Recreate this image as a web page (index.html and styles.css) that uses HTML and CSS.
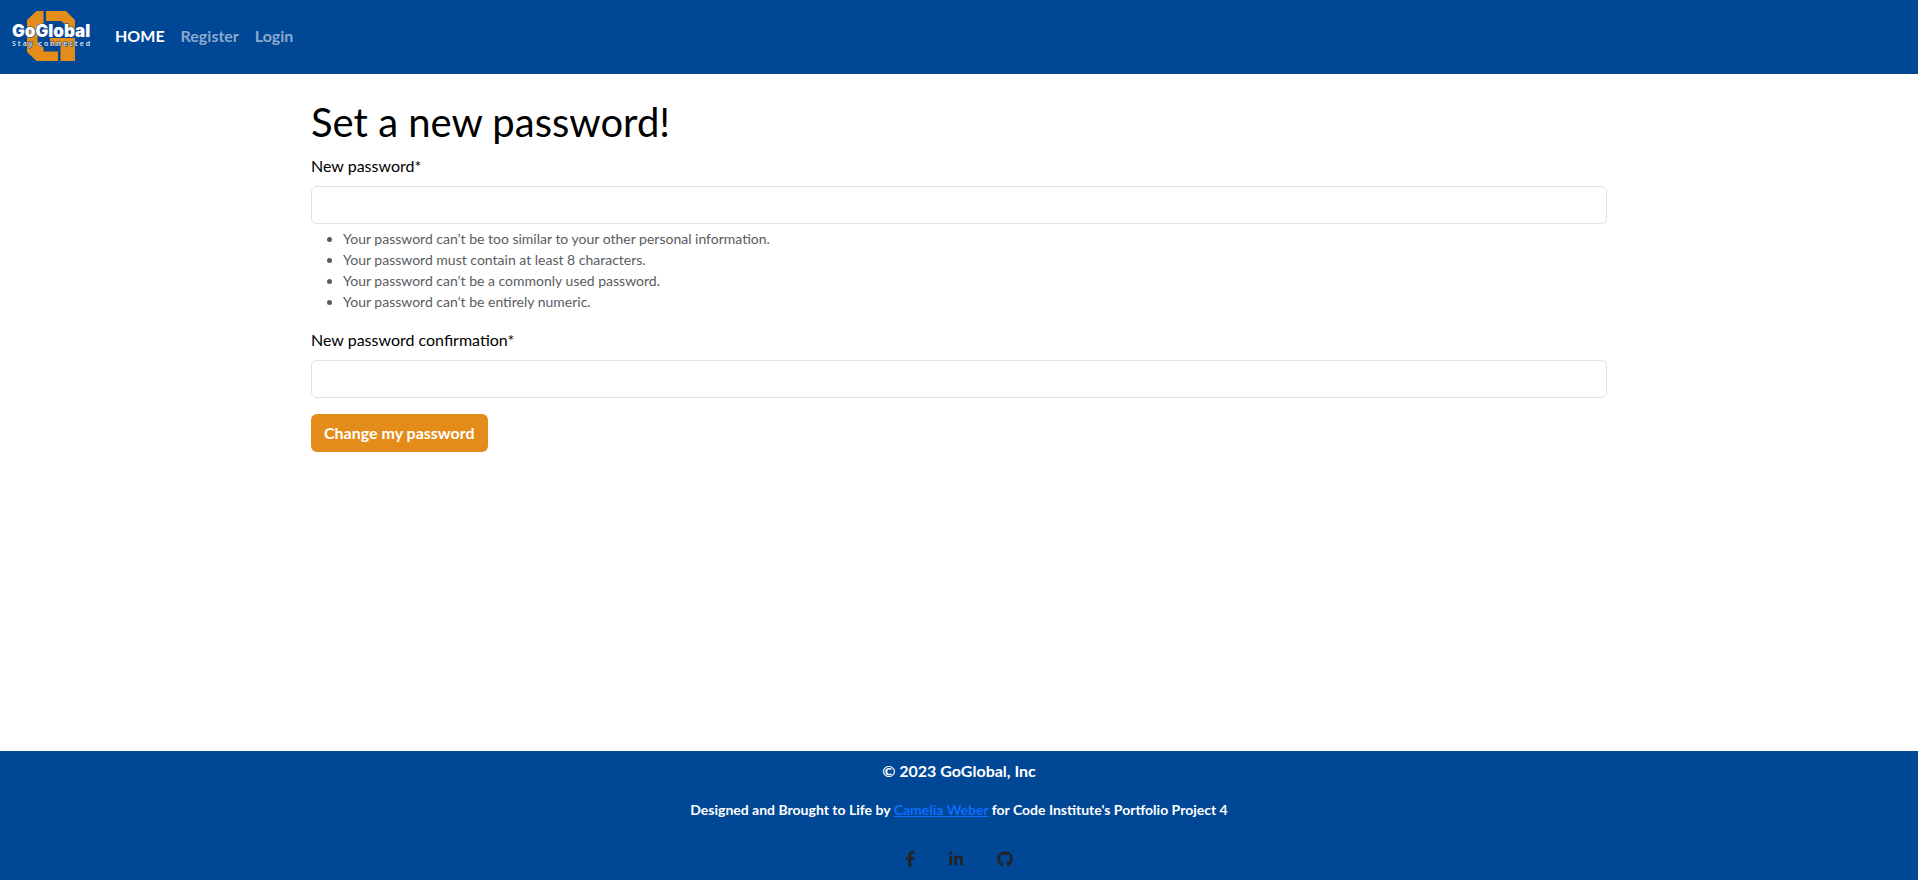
FILE: index.html
```html
<!DOCTYPE html>
<html lang="en">
<head>
<meta charset="utf-8">
<meta name="viewport" content="width=device-width, initial-scale=1">
<title>GoGlobal - Set a new password</title>
<link rel="stylesheet" href="styles.css">
</head>
<body>
<header>
  <nav class="navbar">
    <a class="brand" href="#" aria-label="GoGlobal home">
      <svg class="logo" viewBox="12 11 79 50" aria-hidden="true">
        <path class="mark" d="M36.5 11h7v14.500l-6 6v10l6 6v4H58V61H36.500L27 52V20zM46 11h20l9 9v11H65.500v-6L61 21H46zM50 38h25v23H60.500V46H50z"/>
        <text class="logo-name" x="12" y="37">GoGlobal</text>
        <text class="logo-tag" x="12" y="46">Stay connected</text>
      </svg>
    </a>
    <ul class="nav">
      <li><a class="nav-link active" href="#">HOME</a></li>
      <li><a class="nav-link" href="#">Register</a></li>
      <li><a class="nav-link" href="#">Login</a></li>
    </ul>
  </nav>
</header>
<main class="container">
  <h1>Set a new password!</h1>
  <form>
    <div class="field">
      <label for="password1">New password*</label>
      <input id="password1" type="password" aria-describedby="password-help">
      <ul class="help" id="password-help">
        <li>Your password can’t be too similar to your other personal information.</li>
        <li>Your password must contain at least 8 characters.</li>
        <li>Your password can’t be a commonly used password.</li>
        <li>Your password can’t be entirely numeric.</li>
      </ul>
    </div>
    <div class="field">
      <label for="password2">New password confirmation*</label>
      <input id="password2" type="password">
    </div>
    <button class="btn" type="button">Change my password</button>
  </form>
</main>
<footer class="footer">
  <p>© 2023 GoGlobal, Inc</p>
  <p class="credit">Designed and Brought to Life by <a href="#">Camelia Weber</a> for Code Institute's Portfolio Project 4</p>
  <div class="social">
    <a href="#" aria-label="Facebook"><svg width="10" height="16" viewBox="0 0 320 512"><path d="M279.14 288l14.22-92.66h-88.91v-60.13c0-25.35 12.42-50.06 52.24-50.06h40.42V6.26S260.43 0 225.36 0c-73.22 0-121.08 44.38-121.08 124.72v70.62H22.89V288h81.39v224h100.17V288z"/></svg></a>
    <a href="#" aria-label="LinkedIn"><svg width="14" height="16" viewBox="0 0 448 512"><path d="M100.28 448H7.4V148.9h92.88zM53.79 108.1C24.09 108.1 0 83.5 0 53.8a53.79 53.79 0 0 1 107.58 0c0 29.7-24.1 54.3-53.79 54.3zM447.9 448h-92.68V302.4c0-34.7-.7-79.2-48.29-79.2-48.29 0-55.69 37.7-55.69 76.7V448h-92.78V148.9h89.08v40.8h1.3c12.4-23.5 42.69-48.3 87.88-48.3 94 0 111.28 61.9 111.28 142.3V448z"/></svg></a>
    <a href="#" aria-label="GitHub"><svg width="16" height="16" viewBox="0 0 496 512"><path d="M165.9 397.4c0 2-2.3 3.6-5.2 3.6-3.3.3-5.6-1.3-5.6-3.6 0-2 2.3-3.6 5.2-3.6 3-.3 5.6 1.3 5.6 3.6zm-31.1-4.5c-.7 2 1.3 4.3 4.3 4.9 2.6 1 5.6 0 6.2-2s-1.3-4.3-4.3-5.2c-2.6-.7-5.5.3-6.2 2.3zm44.2-1.7c-2.9.7-4.9 2.6-4.6 4.9.3 2 2.9 3.3 5.9 2.6 2.9-.7 4.9-2.6 4.6-4.6-.3-1.9-3-3.2-5.9-2.9zM244.8 8C106.1 8 0 113.3 0 252c0 110.9 69.8 205.8 169.5 239.2 12.8 2.3 17.3-5.6 17.3-12.1 0-6.2-.3-40.4-.3-61.4 0 0-70 15-84.7-29.8 0 0-11.4-29.1-27.8-36.6 0 0-22.9-15.7 1.6-15.4 0 0 24.9 2 38.6 25.8 21.9 38.6 58.6 27.5 72.9 20.9 2.3-16 8.8-27.1 16-33.7-55.9-6.2-112.3-14.3-112.3-110.5 0-27.5 7.6-41.3 23.6-58.9-2.6-6.5-11.1-33.3 2.6-67.9 20.9-6.5 69 27 69 27 20-5.6 41.5-8.5 62.8-8.5s42.8 2.9 62.8 8.5c0 0 48.1-33.6 69-27 13.7 34.7 5.2 61.4 2.6 67.9 16 17.7 25.8 31.5 25.8 58.9 0 96.5-58.9 104.2-114.8 110.5 9.2 7.9 17 22.9 17 46.4 0 33.7-.3 75.4-.3 83.6 0 6.5 4.6 14.4 17.3 12.1C428.2 457.8 496 362.9 496 252 496 113.3 383.5 8 244.8 8zM97.2 352.9c-1.3 1-1 3.3.7 5.2 1.6 1.6 3.9 2.3 5.2 1 1.3-1 1-3.3-.7-5.2-1.6-1.6-3.9-2.3-5.2-1zm-10.8-8.1c-.7 1.3.3 2.9 2.3 3.9 1.6 1 3.6.7 4.3-.7.7-1.3-.3-2.9-2.3-3.9-2-.6-3.6-.3-4.3.7zm32.4 35.6c-1.6 1.3-1 4.3 1.3 6.2 2.3 2.3 5.2 2.6 6.5 1 1.3-1.3.7-4.3-1.3-6.2-2.2-2.3-5.2-2.6-6.5-1zm-11.4-14.7c-1.6 1-1.6 3.6 0 5.9 1.6 2.3 4.3 3.3 5.6 2.3 1.6-1.3 1.6-3.9 0-6.2-1.4-2.3-4-3.3-5.6-2z"/></svg></a>
  </div>
</footer>
</body>
</html>
```

FILE: styles.css
```css
:root {
  --blue: #004796;
  --orange: #e48c19;
}

*, *::before, *::after { box-sizing: border-box; }

body {
  display: flex;
  flex-direction: column;
  min-height: 100vh;
  margin: 0;
  background: #fff;
  color: #000;
  font: 16px/24px Lato, sans-serif;
}

.navbar {
  display: flex;
  align-items: center;
  gap: 16px;
  padding: 11px 12px 13px;
  background: var(--blue);
}

.brand { display: block; }
.logo { display: block; width: 79px; height: 50px; overflow: visible; }
.mark { fill: var(--orange); }

.logo-name, .logo-tag {
  fill: #fff;
  stroke: var(--blue);
  stroke-width: 1px;
  paint-order: stroke;
}

.logo-name { font: 900 17px Inter, sans-serif; }
.logo-tag { font: 600 7px "Noto Sans", sans-serif; letter-spacing: 2px; fill: #dbe6f2; }

.nav {
  display: flex;
  margin: 0;
  padding: 0;
  list-style: none;
}

.nav-link {
  display: block;
  padding: 8px;
  color: #8ca9cd;
  font-weight: 700;
  text-decoration: none;
}

.nav-link.active { color: #fff; }

.container {
  flex: 1;
  width: 100%;
  max-width: 1320px;
  margin: 0 auto;
  padding: 24px 12px;
}

h1 {
  margin: 0 0 8px;
  font-size: 40px;
  font-weight: 400;
  line-height: 48px;
}

.field { margin-bottom: 16px; }

.field label {
  display: block;
  margin-bottom: 8px;
}

.field input {
  display: block;
  width: 100%;
  height: 38px;
  padding: 6px 12px;
  border: 1px solid #dee2e6;
  border-radius: 6px;
  background: #fff;
  font: inherit;
}

.help {
  margin: 4px 0 0;
  padding-left: 32px;
  color: #595c5f;
  font-size: 14px;
  line-height: 21px;
}

.btn {
  display: block;
  padding: 7px 13px;
  border: 0;
  border-radius: 6px;
  background: var(--orange);
  color: #fff;
  font: inherit;
  font-weight: 700;
}

.footer {
  padding: 8px 12px 13px;
  background: var(--blue);
  color: #fff;
  font-weight: 700;
  text-align: center;
}

.footer p { margin: 0 0 16px; }
.footer .credit { font-size: 14px; line-height: 21px; }
.credit a { color: #0d6efd; }

.social {
  display: flex;
  justify-content: center;
  gap: 34px;
  padding-top: 15px;
}

.social a { color: #212529; }
.social svg { display: block; fill: currentColor; }
```
